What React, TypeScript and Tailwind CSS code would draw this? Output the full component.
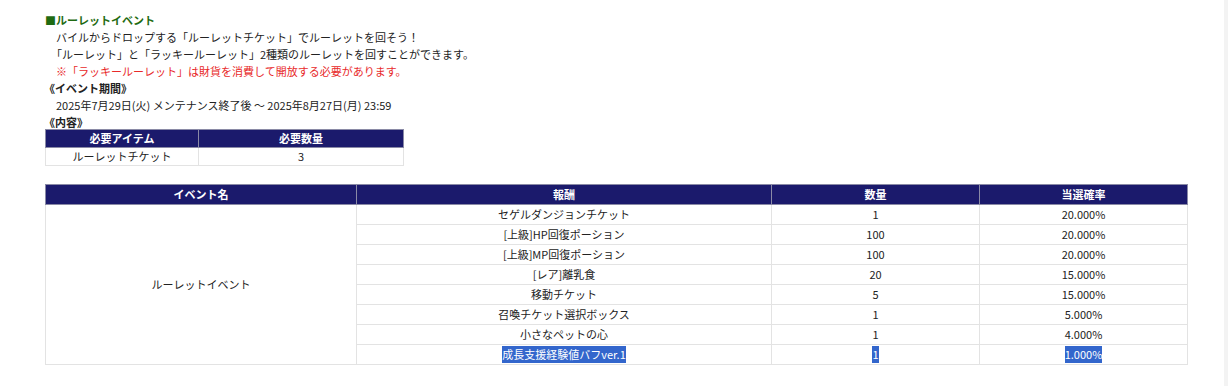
const FONT = { fontFamily: '"Noto Sans CJK JP", "Noto Sans", sans-serif' };

type Reward = { name: string; qty: string; rate: string };

const rewards: Reward[] = [
  { name: "セゲルダンジョンチケット", qty: "1", rate: "20.000%" },
  { name: "[上級]HP回復ポーション", qty: "100", rate: "20.000%" },
  { name: "[上級]MP回復ポーション", qty: "100", rate: "20.000%" },
  { name: "[レア]離乳食", qty: "20", rate: "15.000%" },
  { name: "移動チケット", qty: "5", rate: "15.000%" },
  { name: "召喚チケット選択ボックス", qty: "1", rate: "5.000%" },
  { name: "小さなペットの心", qty: "1", rate: "4.000%" },
  { name: "成長支援経験値バフver.1", qty: "1", rate: "1.000%" },
];

// the last row shows up selected in the screenshot
function Sel({ on, children }: { on: boolean; children: React.ReactNode }) {
  if (!on) return <>{children}</>;
  return <span className="inline-block bg-[#3366cc] text-white leading-[17px]">{children}</span>;
}

export default function App() {
  const th = "bg-[#1b1a6c] text-white font-bold border border-[#8a8aa6] p-0";
  const td = "border border-[#e3e3e3] p-0 text-center text-[#222]";

  return (
    <div className="flex w-[1228px] h-[386px] bg-white overflow-hidden" style={FONT}>
      <div className="flex-1 pl-[45px] pt-[12px] text-[11px] leading-[17px] text-[#222]">
        <div className="font-bold text-[#1f6b12]">■ルーレットイベント</div>
        <div className="pl-[11px]">バイルからドロップする「ルーレットチケット」でルーレットを回そう！</div>
        <div className="pl-[6px]">「ルーレット」と「ラッキールーレット」2種類のルーレットを回すことができます。</div>
        <div className="pl-[11px] text-[#e8292a]">※「ラッキールーレット」は財貨を消費して開放する必要があります。</div>
        <div className="font-bold -ml-[1px]">《イベント期間》</div>
        <div className="pl-[11px]">2025年7月29日(火) メンテナンス終了後 ～ 2025年8月27日(月) 23:59</div>
        <div className="font-bold -ml-[1px]">《内容》</div>

        <table className="border-collapse table-fixed w-[359px] mt-[-2px]">
          <thead>
            <tr className="h-[18px]">
              <th className={th + " w-[153px]"}>必要アイテム</th>
              <th className={th}>必要数量</th>
            </tr>
          </thead>
          <tbody>
            <tr className="h-[18px]">
              <td className={td}>ルーレットチケット</td>
              <td className={td}>3</td>
            </tr>
          </tbody>
        </table>

        <table className="border-collapse table-fixed w-[1143px] mt-[18px]">
          <thead>
            <tr className="h-[20px]">
              <th className={th + " w-[311px]"}>イベント名</th>
              <th className={th + " w-[415px]"}>報酬</th>
              <th className={th + " w-[208px]"}>数量</th>
              <th className={th}>当選確率</th>
            </tr>
          </thead>
          <tbody>
            {rewards.map((r, i) => {
              const last = i === rewards.length - 1;
              return (
                <tr key={r.name} className="h-[20px]">
                  {i === 0 && (
                    <td className={td} rowSpan={rewards.length}>
                      ルーレットイベント
                    </td>
                  )}
                  <td className={td}>
                    <Sel on={last}>{r.name}</Sel>
                  </td>
                  <td className={td}>
                    <Sel on={last}>{r.qty}</Sel>
                  </td>
                  <td className={td}>
                    <Sel on={last}>{r.rate}</Sel>
                  </td>
                </tr>
              );
            })}
          </tbody>
        </table>
      </div>
      <div className="w-[4px] h-full bg-[#f3f3f3]" />
    </div>
  );
}
